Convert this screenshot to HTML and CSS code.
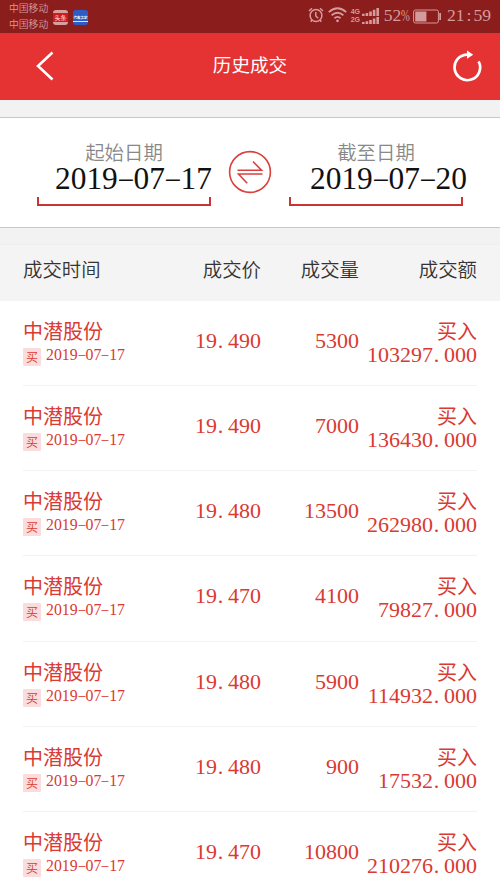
FILE: index.html
```html
<!DOCTYPE html>
<html lang="zh-CN">
<head>
    <meta charset="UTF-8">
    <meta name="viewport" content="width=device-width, initial-scale=1.0">
    <title>历史成交</title>
    <link rel="stylesheet" href="styles.css">
</head>
<body>
    <div class="status-bar">
        <div class="carriers">
            <span>中国移动</span>
            <span>中国移动</span>
        </div>
        <div class="app-icon app-news"><span>头条</span></div>
        <div class="app-icon app-car"><span>汽车之家</span></div>
        <div class="status-right">
            <svg class="alarm" width="16" height="16" viewBox="0 0 16 16" fill="none" stroke="currentColor" stroke-width="1.5">
                <circle cx="8" cy="8.5" r="5.9"/>
                <path d="M7.8 5v4l2.4 2.2M1 4l3-2.8M15 4l-3-2.8M3.9 13l-1.2 1.7M12.1 13l1.2 1.7"/>
            </svg>
            <svg class="wifi" width="19" height="16" viewBox="0 0 19 16" fill="none" stroke="currentColor" stroke-width="1.8">
                <path d="M.8 5.2Q9.5-2.6 18.2 5.2M3.6 8.3q5.9-5 11.8 0M6.4 11.2q3.1-2.6 6.2 0"/>
                <circle cx="9.5" cy="13.8" r="1.4" fill="currentColor" stroke="none"/>
            </svg>
            <div class="signals">
                <div class="signal"><span>4G</span><svg width="17" height="8" viewBox="0 0 17 9" preserveAspectRatio="none" fill="currentColor"><path d="M0 6.5h2.6V9H0zM3.6 5.5h2.6V9H3.6zM7.2 4h2.6v5H7.2zM10.8 2h2.6v7h-2.6zM14.4 0H17v9h-2.6z"/></svg></div>
                <div class="signal"><span>2G</span><svg width="17" height="7" viewBox="0 0 17 9" preserveAspectRatio="none" fill="currentColor"><path d="M0 6.5h2.6V9H0zM3.6 5.5h2.6V9H3.6zM7.2 4h2.6v5H7.2zM10.8 2h2.6v7h-2.6zM14.4 0H17v9h-2.6z"/></svg></div>
            </div>
            <span class="num status-num">52<i class="percent">%</i></span>
            <svg class="battery" width="29" height="15" viewBox="0 0 29 15" fill="none" stroke="currentColor">
                <rect x=".6" y="1" width="24.8" height="13" rx="1.8" stroke-width="1"/>
                <path d="M2.2 2.5h11.2v10H2.2zM26.3 4H28v7h-1.7z" fill="currentColor" stroke="none"/>
            </svg>
            <span class="num status-num">21<i class="colon">:</i>59</span>
        </div>
    </div>

    <div class="nav-bar">
        <svg class="back" width="18" height="30" viewBox="0 0 18 30" fill="none" stroke="#fff" stroke-width="2.6">
            <path d="M16.5 1.5L2 15l14.5 13.5"/>
        </svg>
        <h1>历史成交</h1>
        <svg class="refresh" width="30" height="32" viewBox="0 0 30 32" fill="none" stroke="#fff" stroke-width="2.7">
            <path d="M16 4.6A12.8 12.8 0 1 0 26.6 11.3"/>
            <path d="M15 .5l6.2 4.3L15 8.7z" fill="#fff" stroke="none"/>
        </svg>
    </div>

    <div class="date-panel">
        <div class="date-field">
            <label>起始日期</label>
            <div class="num date-value" data-num="2019-07-17"></div>
        </div>
        <svg class="swap" width="44" height="44" viewBox="0 0 44 44" fill="none" stroke="#d9403e" stroke-width="1.6">
            <circle cx="22" cy="22" r="20.4"/>
            <path d="M9.5 20.3h24L25 11.5M34.5 24h-24l8.7 9.2"/>
        </svg>
        <div class="date-field date-end">
            <label>截至日期</label>
            <div class="num date-value" data-num="2019-07-20"></div>
        </div>
    </div>

    <div class="table-head columns">
        <span>成交时间</span>
        <span>成交价</span>
        <span>成交量</span>
        <span>成交额</span>
    </div>
    <div class="list" id="list"></div>

    <script>
        const trades = [
            ['19.490', '5300', '103297.000'],
            ['19.490', '7000', '136430.000'],
            ['19.480', '13500', '262980.000'],
            ['19.470', '4100', '79827.000'],
            ['19.480', '5900', '114932.000'],
            ['19.480', '900', '17532.000'],
            ['19.470', '10800', '210276.000']
        ];

        // 标点与数字等宽
        function formatNum(text) {
            return text.replace(/[-.]/g, c => `<i class="${c === '-' ? 'dash' : 'dot'}">${c}</i>`);
        }

        document.getElementById('list').innerHTML = trades.map(([price, count, amount]) => `
            <div class="row columns">
                <div class="stock">
                    <div class="name">中潜股份</div>
                    <div class="stock-date"><span class="tag">买</span><span class="num">${formatNum('2019-07-17')}</span></div>
                </div>
                <div class="num value">${formatNum(price)}</div>
                <div class="num value">${formatNum(count)}</div>
                <div class="amount">
                    <div class="name">买入</div>
                    <div class="num">${formatNum(amount)}</div>
                </div>
            </div>`).join('');

        document.querySelectorAll('[data-num]').forEach(el => {
            el.innerHTML = formatNum(el.dataset.num);
        });
    </script>
</body>
</html>
```

FILE: styles.css
```css
*,
*::after {
    box-sizing: border-box;
}
body {
    margin: 0;
    height: 889px;
    overflow: hidden;
    background: #fff;
    font-family: "Noto Sans CJK SC", sans-serif;
    font-weight: 350;
}
svg {
    display: block;
    flex: none;
}

/* 数字 */
.num {
    font-family: "Liberation Serif", "Noto Sans CJK SC", serif;
    font-weight: 400;
    white-space: nowrap;
}
.num i {
    display: inline-block;
    width: 0.5em;
    font-style: normal;
    text-align: left;
}
.num .dash {
    text-align: center;
    transform: translateY(-0.04em) scale(1.7, 0.7);
}
.num .dot {
    padding-left: 0.03em;
}
.num .colon {
    text-align: center;
}
.num .percent {
    transform: scaleX(0.6);
    transform-origin: left;
}

/* 状态栏 */
.status-bar {
    display: flex;
    align-items: flex-start;
    height: 33px;
    padding-left: 9px;
    background: #8b1d1d;
    color: #d59b9b;
}
.carriers {
    display: flex;
    flex-direction: column;
    width: 43px;
    padding-top: 1px;
    font-size: 9.8px;
    line-height: 15.5px;
    white-space: nowrap;
}
.app-icon {
    display: flex;
    align-items: center;
    justify-content: center;
    width: 15px;
    height: 15px;
    margin-top: 10px;
    border-radius: 3px;
    overflow: hidden;
    color: #fff;
    line-height: 1;
    white-space: nowrap;
}
.app-news {
    margin-left: 1px;
    background: linear-gradient(#d8a09c 3px, #d21a1a 3px, #d21a1a 12px, #d8a09c 12px);
    font-size: 6px;
}
.app-car {
    margin-left: 5px;
    background: linear-gradient(#2c5cc4 11px, #dbe3f3 11px, #dbe3f3 12px, #2c5cc4 12px);
}
.app-car span {
    font-size: 3.5px;
    font-weight: 700;
}
.status-right {
    display: flex;
    align-items: flex-start;
    margin-left: auto;
    padding-right: 9px;
}
.alarm {
    margin-top: 7px;
}
.wifi {
    margin: 7px 0 0 4px;
}
.signals {
    width: 28px;
    margin: 7px 0 0 4px;
}
.signal {
    display: flex;
    align-items: flex-end;
    justify-content: space-between;
    height: 8.5px;
    font: 700 7px/8px "Liberation Sans", sans-serif;
}
.status-num {
    margin-left: 5px;
    font-size: 17.6px;
    line-height: 31px;
}
.battery {
    margin: 9px 0 0 3px;
}

/* 标题栏 */
.nav-bar {
    display: flex;
    justify-content: space-between;
    align-items: center;
    height: 67px;
    padding: 0 18px 0 36px;
    background: #e53232;
}
.nav-bar svg {
    margin-bottom: 1px;
}
.nav-bar h1 {
    margin: 0 0 6px;
    padding-right: 6px;
    color: #fff;
    font-size: 18.6px;
    font-weight: 400;
}

/* 日期选择 */
.date-panel {
    display: flex;
    height: 111px;
    margin-top: 17px;
    padding: 0 37px;
    border-top: 1px solid #c8c8c8;
    border-bottom: 1px solid #c8c8c8;
    background: #fff;
    box-shadow: 0 0 0 17px #f2f2f2;
    position: relative;
    z-index: -1;
}
.date-field {
    flex: none;
    width: 174px;
    height: 88px;
    padding-top: 21px;
    position: relative;
}
.date-field::after {
    content: "";
    position: absolute;
    left: 0;
    bottom: 0;
    width: 174px;
    height: 9px;
    border: 2px solid #cc3333;
    border-top: 0;
}
.date-field label {
    display: block;
    color: #888;
    font-size: 19.4px;
    line-height: 25px;
    text-align: center;
}
.date-value {
    padding-left: 18px;
    color: #111;
    font-size: 31.4px;
    line-height: 30px;
}
.swap {
    margin: 32px 17px 0;
}
.date-end .date-value {
    padding-left: 21px;
}

/* 成交列表 */
.columns {
    display: grid;
    grid-template-columns: 130px 108px 98px 118px;
    padding: 0 23px;
    text-align: right;
}
.columns > :first-child {
    text-align: left;
}
.table-head {
    height: 57px;
    margin-top: 16px;
    align-items: center;
    border-top: 1px solid #efefef;
    background: #f4f4f4;
    color: #333;
    font-size: 19.4px;
    line-height: 24px;
    padding-bottom: 9px;
}
.row {
    position: relative;
    height: 85.17px;
    color: #d93a32;
    font-size: 22px;
}
.row::after {
    content: "";
    position: absolute;
    left: 23px;
    right: 23px;
    bottom: 0;
    height: 1px;
    background: #f2f2f2;
}
.name {
    padding-top: 17px;
    font-size: 20px;
    font-weight: 400;
    line-height: 26px;
}
.stock-date {
    display: flex;
    font-size: 15.8px;
    line-height: 21px;
}
.stock-date .num {
    margin-left: 5px;
}
.tag {
    width: 18px;
    height: 18px;
    margin-top: 4px;
    border-radius: 1px;
    background: #fadcdc;
    font-size: 12px;
    line-height: 18px;
    text-align: center;
}
.value {
    line-height: 79px;
}
.amount .num {
    line-height: 22px;
}
```
